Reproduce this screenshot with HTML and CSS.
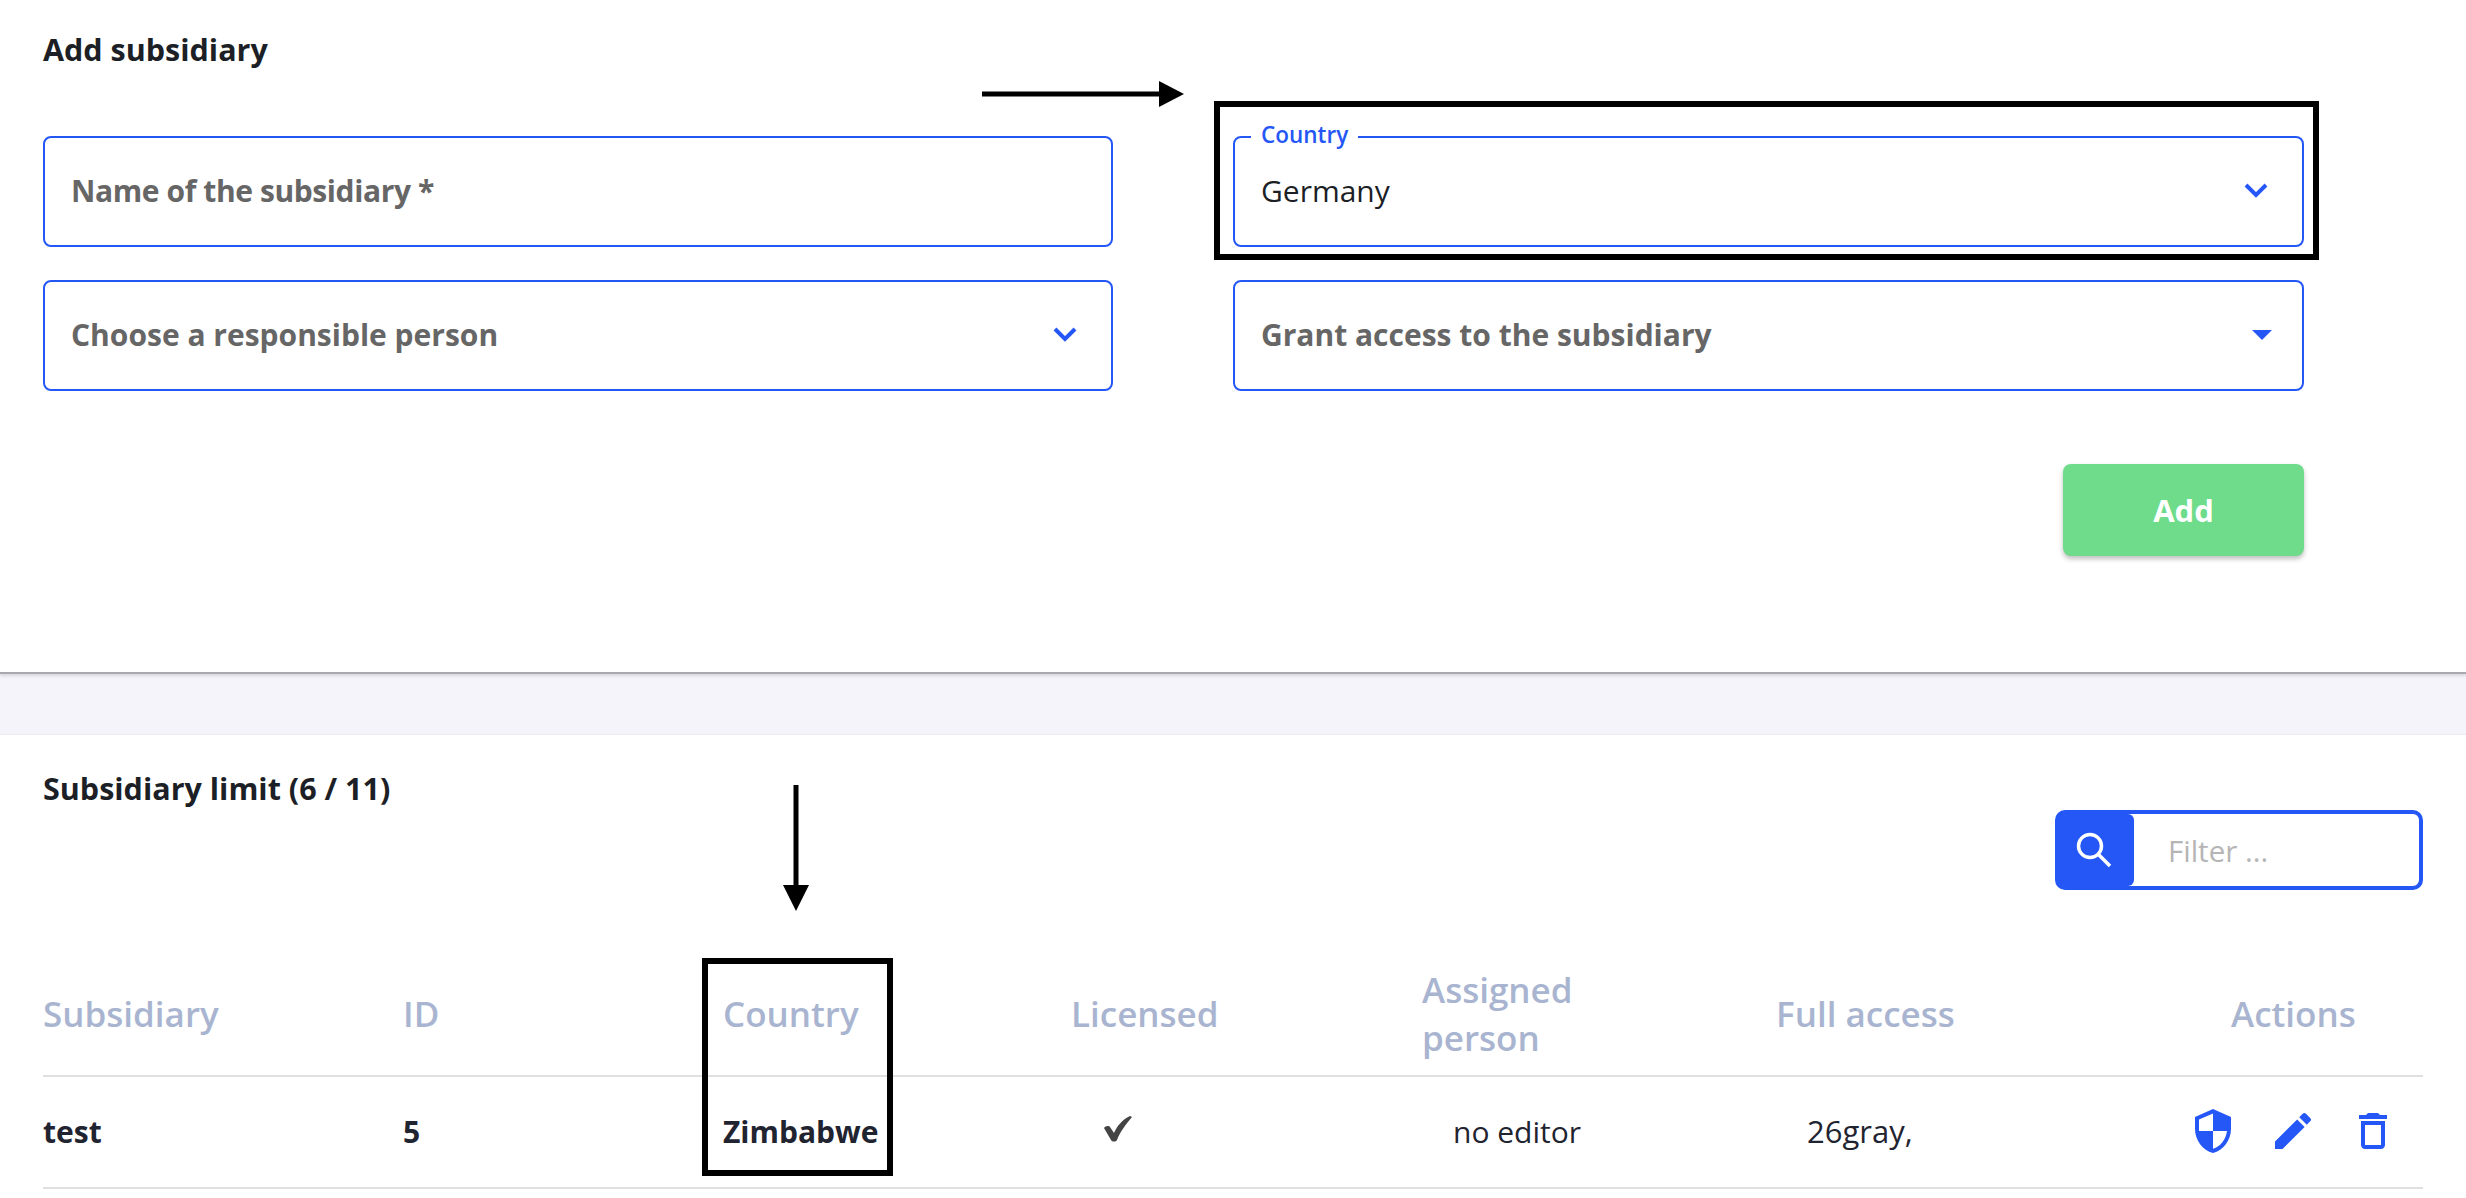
FILE: index.html
```html
<!DOCTYPE html>
<html lang="en">
<head>
<meta charset="utf-8">
<title>Subsidiaries</title>
<link rel="stylesheet" href="styles.css">
</head>
<body>
<main class="page">
  <section class="add">
    <h2 class="title">Add subsidiary</h2>
    <form class="form">
      <div class="field"><span class="placeholder tight">Name of the subsidiary *</span></div>
      <div class="field">
        <span class="legend">Country</span>
        <span class="value">Germany</span>
        <svg class="chev" viewBox="0 0 24 15"><path d="M2 2l10 10L22 2" fill="none" stroke="currentColor" stroke-width="4"/></svg>
      </div>
      <div class="field">
        <span class="placeholder">Choose a responsible person</span>
        <svg class="chev" viewBox="0 0 24 15"><path d="M2 2l10 10L22 2" fill="none" stroke="currentColor" stroke-width="4"/></svg>
      </div>
      <div class="field">
        <span class="placeholder">Grant access to the subsidiary</span>
        <svg class="tri" viewBox="0 0 20 10"><path d="M0 0h20L10 10z" fill="currentColor"/></svg>
      </div>
    </form>
    <div class="actions-row"><button class="add-btn" type="button">Add</button></div>
  </section>
  <div class="band"></div>
  <section class="list">
    <div class="list-head">
      <h2 class="title">Subsidiary limit (6 / 11)</h2>
      <div class="filter">
        <span class="filter-icon">
          <svg viewBox="0 0 36 36" width="36" height="36"><circle cx="14" cy="14" r="11.500" fill="none" stroke="currentColor" stroke-width="3.500"/><path d="M22.500 22.500L34 34" fill="none" stroke="currentColor" stroke-width="3.500"/></svg>
        </span>
        <span class="filter-text">Filter ...</span>
      </div>
    </div>
    <div class="table">
      <div class="row row-head">
        <div>Subsidiary</div>
        <div>ID</div>
        <div>Country</div>
        <div>Licensed</div>
        <div class="wrap">Assigned person</div>
        <div>Full access</div>
        <div class="h-actions">Actions</div>
      </div>
      <div class="row row-body">
        <div class="strong">test</div>
        <div class="strong">5</div>
        <div class="strong">Zimbabwe</div>
        <div class="check"><svg viewBox="0 0 32 32" width="32" height="32"><path d="M2 15c1-2 5-3 6-1l4 6C15 13 20 7 28 3l2 1C24 11 18 19 15 27c-1 2-5 2-6 0z" fill="currentColor"/></svg></div>
        <div class="indent">no editor</div>
        <div class="indent gray">26gray,</div>
        <div class="icons">
          <svg viewBox="0 0 24 24" width="48" height="48"><path fill="currentColor" d="M12 1L3 5v6c0 5.550 3.840 10.740 9 12 5.160-1.260 9-6.450 9-12V5l-9-4zm0 10.990h7c-.53 4.120-3.280 7.790-7 8.940V12H5V6.300l7-3.110v8.800z"/></svg>
          <svg viewBox="0 0 24 24" width="48" height="48"><path fill="currentColor" d="M3 17.250V21h3.750L17.810 9.940l-3.750-3.750L3 17.250zM20.710 7.040c.39-.39.39-1.020 0-1.410l-2.340-2.340c-.39-.39-1.020-.39-1.410 0l-1.830 1.830 3.750 3.750 1.830-1.830z"/></svg>
          <svg viewBox="0 0 24 24" width="48" height="48"><path fill="currentColor" d="M6 19c0 1.100.9 2 2 2h8c1.100 0 2-.9 2-2V7H6v12zM8 9h8v10H8V9zm7.500-5l-1-1h-5l-1 1H5v2h14V4z"/></svg>
        </div>
      </div>
    </div>
  </section>
  <svg class="arrow arrow-right" viewBox="0 0 202 26"><path d="M0 13h178" stroke="#000" stroke-width="5"/><path d="M177 0l25 13-25 13z" fill="#000"/></svg>
  <svg class="arrow arrow-down" viewBox="0 0 26 126"><path d="M13 0v102" stroke="#000" stroke-width="5"/><path d="M0 100h26l-13 26z" fill="#000"/></svg>
  <div class="mark mark-country"></div>
  <div class="mark mark-column"></div>
</main>
</body>
</html>
```
FILE: styles.css
```css
* { box-sizing: border-box; }
html, body { margin: 0; padding: 0; }
body {
  background: #fff;
  color: #1f2430;
  font-family: "Open Sans", "Noto Sans", sans-serif;
  width: 2466px;
  height: 1198px;
  overflow: hidden;
}
.page { position: relative; height: 1198px; }
.title {
  margin: 0;
  font-size: 30.500px;
  line-height: 40px;
  font-weight: 700;
  color: #1c1f26;
}
.add {
  height: 674px;
  padding: 29px 0 0 43px;
  border-bottom: 2px solid #a8a8b0;
  box-shadow: 0 2px 3px rgba(0, 0, 0, .12);
  position: relative;
}
.form {
  margin-top: 67px;
  display: grid;
  grid-template-columns: 1070px 1071px;
  column-gap: 120px;
  row-gap: 33px;
}
.field {
  position: relative;
  height: 111px;
  border: 2px solid #2557f7;
  border-radius: 8px;
  padding: 0 26px 2px;
  display: flex;
  align-items: center;
  justify-content: space-between;
  color: #2557f7;
}
.placeholder { font-size: 30px; font-weight: 700; color: #666; }
.tight { letter-spacing: -.4px; }
.value { font-size: 30px; color: #1c1f26; }
.legend {
  position: absolute;
  top: -16px;
  left: 16px;
  padding: 0 10px;
  background: #fff;
  font-size: 22.500px;
  line-height: 26px;
  font-weight: 600;
  color: #2557f7;
}
.chev { width: 24px; height: 15px; margin-right: 8px; }
.tri { width: 20px; height: 10px; margin-right: 4px; }
.actions-row {
  display: flex;
  justify-content: flex-end;
  width: 2261px;
  margin-top: 73px;
}
.add-btn {
  width: 241px;
  height: 92px;
  border: 0;
  border-radius: 8px;
  background: #6edc8a;
  color: #fff;
  font: 700 31px "Open Sans", sans-serif;
  box-shadow: 0 3px 5px rgba(0, 0, 0, .25);
}
.band {
  height: 61px;
  background: #f4f4fa;
  border-bottom: 1px solid #ececf2;
}
.list { padding: 0 43px; }
.list-head {
  display: flex;
  justify-content: space-between;
  align-items: flex-start;
  padding-top: 33px;
  height: 223px;
}
.filter {
  margin-top: 42px;
  width: 368px;
  height: 80px;
  display: flex;
  align-items: stretch;
  border: 4px solid #2557f7;
  border-radius: 10px;
}
.filter-icon {
  width: 76px;
  margin-left: -1px;
  padding-right: 5px;
  background: #2557f7;
  color: #fff;
  display: flex;
  align-items: center;
  justify-content: center;
  border-radius: 5px 6px 6px 5px;
}
.filter-text {
  padding-left: 34px;
  align-self: center;
  font-size: 29.500px;
  color: #b5b5b5;
}
.row {
  display: grid;
  grid-template-columns: 360px 320px 348px 351px 354px 413px 234px;
  align-items: center;
  border-bottom: 2px solid #e0e0e0;
}
.row-head {
  height: 119px;
  padding-bottom: 5px;
  color: #a9b5d0;
  font-size: 35px;
  line-height: 48px;
  font-weight: 600;
}
.wrap { width: 190px; }
.h-actions { padding-left: 42px; }
.row-body {
  height: 112px;
  padding-bottom: 2px;
  font-size: 30px;
  color: #1f2430;
}
.strong { font-weight: 700; }
.indent { padding-left: 31px; }
.gray { font-size: 31px; }
.check { padding-left: 31px; height: 32px; margin-top: -4px; color: #444; }
.icons {
  display: flex;
  gap: 32px;
  color: #2557f7;
}
.arrow { position: absolute; }
.arrow-right { left: 982px; top: 81px; width: 202px; height: 26px; }
.arrow-down { left: 783px; top: 785px; width: 26px; height: 126px; }
.mark { position: absolute; border: 6px solid #000; }
.mark-country { left: 1214px; top: 101px; width: 1105px; height: 159px; }
.mark-column { left: 702px; top: 958px; width: 191px; height: 218px; }
```
